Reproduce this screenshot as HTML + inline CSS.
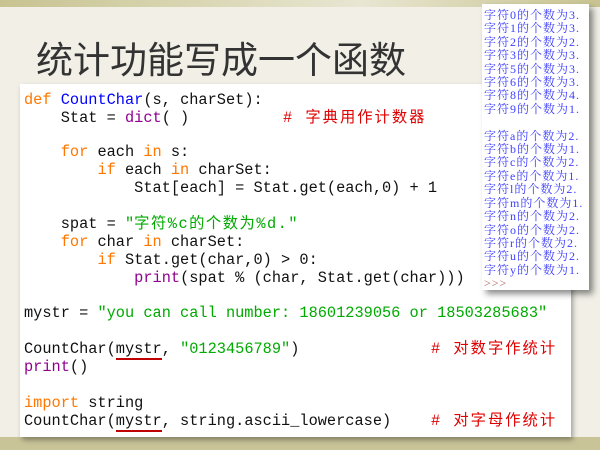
<!DOCTYPE html>
<html><head><meta charset="utf-8"><style>
body{margin:0;width:600px;height:450px;overflow:hidden;background:#f1efe6;position:relative;font-family:"Liberation Sans","Noto Sans CJK SC",sans-serif}
.top{position:absolute;left:0;top:0;width:600px;height:7px;background:linear-gradient(90deg,#c8c390,#e8e6d2 60%,#c8c390)}
.bot{position:absolute;left:0;top:437px;width:600px;height:13px;background:#c9c498}
.title{position:absolute;left:36px;top:34px;font-size:37px;color:#333;font-family:"Noto Sans CJK SC",sans-serif;line-height:46px}
.code{position:absolute;left:20px;top:84px;width:551px;height:353px;background:#fff;box-shadow:2px 3px 5px rgba(0,0,0,.35)}
.l{position:absolute;white-space:pre;font-family:"Liberation Mono","Noto Sans CJK SC",monospace;font-size:15.3px;line-height:18px;color:#111}
.k{color:#ff7700}.b{color:#900090}.s{color:#00aa00}.c{color:#e00000;letter-spacing:2px}.f{color:#0000ff}
.cj{letter-spacing:1.5px}
.u{border-bottom:2px solid #c00000}
.out{position:absolute;left:482px;top:4px;width:107px;height:286px;background:#fff;box-shadow:4px 4px 6px rgba(0,0,0,.45)}
.o{position:absolute;left:2px;white-space:pre;font-family:"Liberation Serif","Noto Serif CJK SC",serif;font-size:12px;line-height:13.4px;color:#4040ff;letter-spacing:1px}
</style></head><body>
<div class="top"></div><div class="bot"></div>
<div class="title">统计功能写成一个函数</div>
<div class="code">
<div class="l" style="left:4px;top:7px"><span class="k">def</span> <span class="f">CountChar</span>(s, charSet):</div>
<div class="l" style="left:4px;top:25px">    Stat = <span class="b">dict</span>( )</div>
<div class="l" style="left:263px;top:25px"><span class="c"># 字典用作计数器</span></div>
<div class="l" style="left:4px;top:59px">    <span class="k">for</span> each <span class="k">in</span> s:</div>
<div class="l" style="left:4px;top:77px">        <span class="k">if</span> each <span class="k">in</span> charSet:</div>
<div class="l" style="left:4px;top:95px">            Stat[each] = Stat.get(each,0) + 1</div>
<div class="l" style="left:4px;top:131px">    spat = <span class="s">"<span class="cj">字符%c的个数为%d.</span>"</span></div>
<div class="l" style="left:4px;top:149px">    <span class="k">for</span> char <span class="k">in</span> charSet:</div>
<div class="l" style="left:4px;top:167px">        <span class="k">if</span> Stat.get(char,0) &gt; 0:</div>
<div class="l" style="left:4px;top:185px">            <span class="b">print</span>(spat % (char, Stat.get(char)))</div>
<div class="l" style="left:4px;top:220px">mystr = <span class="s">"you can call number: 18601239056 or 18503285683"</span></div>
<div class="l" style="left:4px;top:256px">CountChar(<span class="u">mystr</span>, <span class="s">"0123456789"</span>)</div>
<div class="l" style="left:411px;top:256px"><span class="c"># 对数字作统计</span></div>
<div class="l" style="left:4px;top:274px"><span class="b">print</span>()</div>
<div class="l" style="left:4px;top:310px"><span class="k">import</span> string</div>
<div class="l" style="left:4px;top:328px">CountChar(<span class="u">mystr</span>, string.ascii_lowercase)</div>
<div class="l" style="left:411px;top:328px"><span class="c"># 对字母作统计</span></div>
</div>
<div class="out">
<div class="o" style="top:5px">字符0的个数为3.
字符1的个数为3.
字符2的个数为2.
字符3的个数为3.
字符5的个数为3.
字符6的个数为3.
字符8的个数为4.
字符9的个数为1.

字符a的个数为2.
字符b的个数为1.
字符c的个数为2.
字符e的个数为1.
字符l的个数为2.
字符m的个数为1.
字符n的个数为2.
字符o的个数为2.
字符r的个数为2.
字符u的个数为2.
字符y的个数为1.
<span style="color:#b06060">&gt;&gt;&gt;</span></div>
</div>
</body></html>
